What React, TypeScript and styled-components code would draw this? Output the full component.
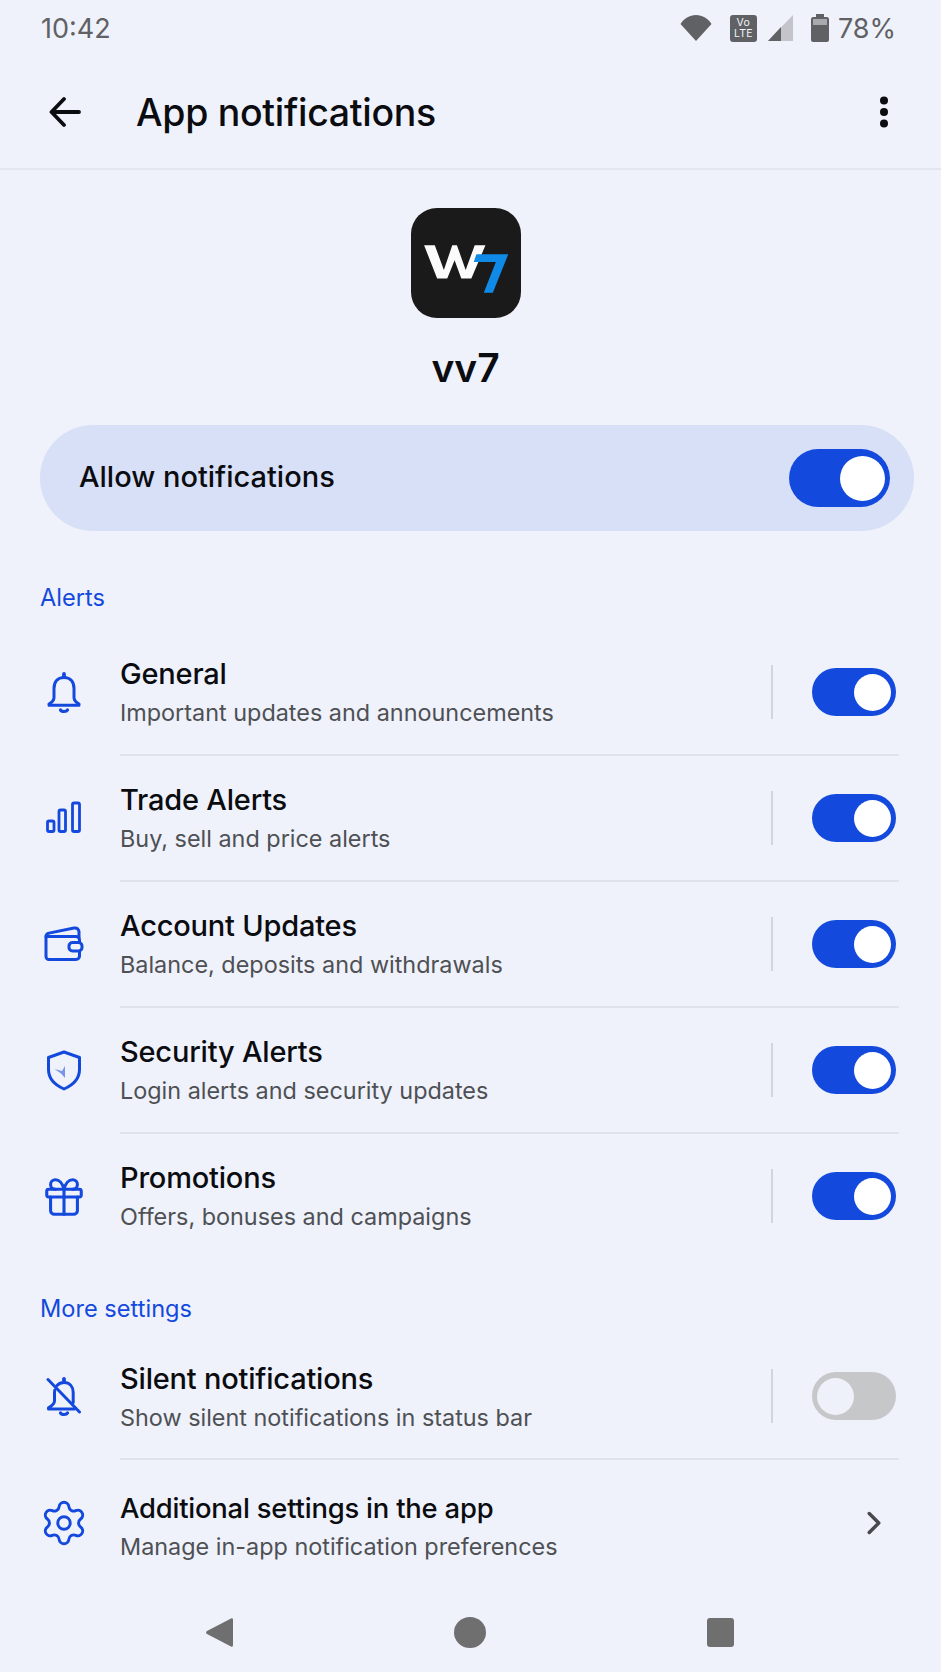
import React from "react";
import styled, { createGlobalStyle } from "styled-components";
import { ChevronRight, Gift, Settings } from "lucide-react";

const BLUE = "#1449dd";
const FONT = `"Inter", "Roboto", "Noto Sans", "Liberation Sans", sans-serif`;

const Global = createGlobalStyle`
  html, body { margin: 0; padding: 0; background: #eff2fb; }
  * { box-sizing: border-box; }
`;

const Page = styled.div`
  width: 941px;
  height: 1672px;
  background: #eff2fb;
  font-family: ${FONT};
  display: flex;
  flex-direction: column;
  overflow: hidden;
`;

const StatusBar = styled.div`
  height: 56px;
  padding: 0 45px 0 41px;
  display: flex;
  align-items: center;
  justify-content: space-between;
  color: #5f6164;
  font-size: 27px;
`;

const StatusIcons = styled.div`
  display: flex;
  align-items: center;
`;

const Volte = styled.div`
  width: 27px;
  height: 27px;
  margin: 0 11px 0 18px;
  border-radius: 3px;
  background: #5f6164;
  color: #f2f4fb;
  font-size: 10.5px;
  line-height: 11px;
  letter-spacing: 0.3px;
  text-align: center;
  padding-top: 2px;
`;

const BatteryGap = styled.span`
  width: 18px;
`;

const Percent = styled.span`
  margin-left: 9px;
`;

const Header = styled.header`
  height: 114px;
  padding: 0 52px 0 49px;
  border-bottom: 2px solid #e3e6ee;
  display: flex;
  align-items: center;
  flex: none;
`;

const Title = styled.h1`
  margin: 0 0 0 55px;
  flex: 1;
  font-size: 37.5px;
  font-weight: 500;
  letter-spacing: -0.3px;
  color: #0b0c10;
`;

const AppBlock = styled.div`
  display: flex;
  flex-direction: column;
  align-items: center;
  padding: 38px 10px 0 0;
`;

const AppIcon = styled.div`
  width: 110px;
  height: 110px;
  border-radius: 26px;
  background: #1a1a1a;
  overflow: hidden;
`;

const AppName = styled.div`
  margin-top: 25px;
  height: 51px;
  font-size: 39px;
  line-height: 50px;
  font-weight: 600;
  color: #0b0c10;
`;

const AllowCard = styled.div`
  margin: 31px 27px 0 40px;
  height: 106px;
  border-radius: 53px;
  background: #d8e0f8;
  padding: 0 24px 0 39px;
  display: flex;
  align-items: center;
  justify-content: space-between;
  font-size: 29px;
  font-weight: 500;
  color: #0b0c10;
`;

const AllowLabel = styled.span`
  padding-bottom: 4px;
`;

const SectionLabel = styled.div<{ $top: number }>`
  margin: ${(p) => p.$top}px 0 0 40px;
  height: 30px;
  font-size: 23.6px;
  line-height: 30px;
  color: ${BLUE};
`;

const SectionGap = styled.div<{ $h: number }>`
  height: ${(p) => p.$h}px;
`;

const Row = styled.div<{ $height?: number }>`
  display: flex;
  align-items: stretch;
  padding-left: 44px;
  height: ${(p) => p.$height ?? 126}px;
`;

const IconSlot = styled.div<{ $lift?: number }>`
  width: 40px;
  margin-right: 36px;
  padding-bottom: ${(p) => p.$lift ?? 0}px;
  flex: none;
  display: flex;
  align-items: center;
  justify-content: center;
  color: ${BLUE};
  svg {
    flex: none;
  }
`;

const RowBody = styled.div<{ $last?: boolean }>`
  flex: 1;
  margin-right: 42px;
  border-bottom: 2px solid ${(p) => (p.$last ? "transparent" : "#dfe2ea")};
  display: flex;
  align-items: center;
`;

const RowText = styled.div<{ $shift?: number }>`
  flex: 1;
  padding-top: ${(p) => p.$shift ?? 2}px;
`;

const RowTitle = styled.div<{ $size?: number }>`
  font-size: ${(p) => p.$size ?? 29}px;
  line-height: 38px;
  font-weight: 500;
  letter-spacing: -0.2px;
  color: #0b0c10;
`;

const RowSub = styled.div`
  margin-top: 1px;
  font-size: 23.4px;
  line-height: 38px;
  color: #4e5054;
`;

const VDivider = styled.div`
  width: 2px;
  height: 54px;
  background: #d3d5da;
  margin-right: 39px;
`;

const Track = styled.div<{ $w: number; $h: number; $on: boolean }>`
  width: ${(p) => p.$w}px;
  height: ${(p) => p.$h}px;
  border-radius: ${(p) => p.$h / 2}px;
  background: ${(p) => (p.$on ? BLUE : "#c6c7c9")};
  padding: 0 5px;
  display: flex;
  align-items: center;
  justify-content: ${(p) => (p.$on ? "flex-end" : "flex-start")};
  flex: none;
`;

const Thumb = styled.div<{ $d: number; $on: boolean }>`
  width: ${(p) => p.$d}px;
  height: ${(p) => p.$d}px;
  border-radius: 50%;
  background: ${(p) => (p.$on ? "#ffffff" : "#eef1f9")};
`;

const ToggleSlot = styled.div`
  width: 87px;
  display: flex;
  flex: none;
`;

const ChevronSlot = styled.div`
  width: 44px;
  margin-top: -2px;
  color: #47494d;
  display: flex;
  align-items: center;
  justify-content: flex-start;
`;

const NavBar = styled.nav`
  margin-top: auto;
  height: 80px;
  flex: none;
  padding-left: 206px;
  display: flex;
  align-items: center;
`;

const NavCircle = styled.div`
  width: 32px;
  height: 31px;
  border-radius: 50%;
  background: #6f6f70;
  margin: 0 221px;
`;

const NavSquare = styled.div`
  width: 27px;
  height: 29px;
  border-radius: 3px;
  background: #6f6f70;
`;

const Toggle = ({ on = true, big = false }: { on?: boolean; big?: boolean }) => (
  <Track $w={big ? 101 : 84} $h={big ? 58 : 48} $on={on}>
    <Thumb $d={big ? 45 : 37} $on={on} />
  </Track>
);

const BellIcon = () => (
  <svg width="40" height="42" viewBox="0 0 40 42" fill="none" stroke="currentColor" strokeWidth="3" strokeLinejoin="round" strokeLinecap="round">
    <path d="M20 5.5c-6.5 0-10 4.600-10 11v9c0 2.500-1.600 4.500-5 6.500v1.200h30V32c-3.400-2-5-4-5-6.500v-9c0-6.400-3.500-11-10-11z" />
    <path d="M20 2v2.500" strokeWidth="3.800" />
    <path d="M16.500 38c1 2 6 2 7 0" strokeWidth="3.200" />
  </svg>
);

const BarsIcon = () => (
  <svg width="36" height="32" viewBox="0 0 36 32" fill="none" stroke="currentColor" strokeWidth="2.800" strokeLinejoin="round">
    <rect x="1.500" y="20" width="6.500" height="10.500" rx="1.500" />
    <rect x="13" y="9" width="6.500" height="21.500" rx="1.500" />
    <rect x="26.500" y="2" width="7" height="28.500" rx="1.500" />
  </svg>
);

const WalletIcon = () => (
  <svg width="40" height="37" viewBox="0 0 40 37" fill="none" stroke="currentColor" strokeWidth="3" strokeLinejoin="round" strokeLinecap="round">
    <path d="M2 11.500h30c2 0 3.500 1.500 3.500 3.500v16c0 2-1.500 3.500-3.500 3.500H5c-1.700 0-3-1.300-3-3V11.500z" />
    <path d="M2 11.500c0-2 1-3 3-3.400L30 3c2.500-.4 4.500 1 5 3.500v6" />
    <rect x="25" y="17.500" width="13" height="8.500" rx="3.500" fill="#eff2fb" />
  </svg>
);

const ShieldIcon = () => (
  <svg width="36" height="41" viewBox="0 0 36 41" fill="none">
    <path d="M18 2 L33.500 7.500 V19.500 C33.500 28.500 27 35 18 39 C9 35 2.500 28.500 2.500 19.500 V7.500 Z" stroke="currentColor" strokeWidth="3" strokeLinejoin="round" />
    <path d="M8.500 19 L16 21 L19 16 V28 L15 23.500 Z" fill="currentColor" opacity="0.55" />
  </svg>
);

const BellOffIcon = () => (
  <svg width="36" height="40" viewBox="0 0 36 40" fill="none" stroke="currentColor" strokeWidth="3" strokeLinejoin="round" strokeLinecap="round">
    <path d="M11 8.500C12.800 6.500 15 5.500 18 5.500c6 0 9.200 4.300 9.200 10v10" />
    <path d="M8.800 13c-.2 1-.3 1.700-.3 2.700V24c0 2.500-2 4.500-6 6.800v1.200h26" />
    <path d="M18 2v2" strokeWidth="3.800" />
    <path d="M14.500 36c1 2 6 2 7 0" strokeWidth="3.200" />
    <path d="M2 2.500 33.500 35" />
  </svg>
);

const WifiIcon = () => (
  <svg width="32" height="26" viewBox="0 0 32 26" fill="#5f6164">
    <path d="M16 26 .5 9C4 3.500 9.500 0 16 0s12 3.500 15.500 9L16 26z" />
  </svg>
);

const SignalIcon = () => (
  <svg width="25" height="26" viewBox="0 0 25 26">
    <path d="M25 0V26H0Z" fill="#c3c5ca" />
    <path d="M13 12V26H0Z" fill="#5f6164" />
  </svg>
);

const BatteryIcon = () => (
  <svg width="18" height="28" viewBox="0 0 18 28">
    <path d="M5 0h8v3h3c1 0 2 1 2 2v21c0 1-1 2-2 2H2c-1 0-2-1-2-2V5c0-1 1-2 2-2h3z" fill="#5f6164" />
    <rect x="2" y="5" width="14" height="6" fill="#a8aaae" />
  </svg>
);

const ArrowIcon = () => (
  <svg width="32" height="32" viewBox="0 0 32 32" fill="none" stroke="#0b0c10" strokeWidth="3.800" strokeLinecap="round" strokeLinejoin="round">
    <path d="M30 16H3M15 3 2.500 16 15 29" />
  </svg>
);

const DotsIcon = () => (
  <svg width="10" height="32" viewBox="0 0 10 32" fill="#0b0c10">
    <circle cx="5" cy="4.500" r="4" />
    <circle cx="5" cy="16" r="4" />
    <circle cx="5" cy="27.500" r="4" />
  </svg>
);

const Logo = () => (
  <svg width="110" height="110" viewBox="92 52 328 328">
    <path d="M131 163h32l27 74 25-74h14l26 74 27-74h32l-42 99h-30l-20-54-22 54h-30z" fill="#fbfbfb" />
    <path d="M287 190h95l-46 115h-27l36-92h-66z" fill="#0f8ae6" />
  </svg>
);

const NavTriangle = () => (
  <svg width="27" height="29" viewBox="0 0 27 29" fill="#6f6f70">
    <path d="M25 .5c1.200-.6 2 0 2 1.500v25c0 1.500-.8 2-2 1.500L1 16c-1.300-.8-1.300-2 0-3z" />
  </svg>
);

type Item = { icon: React.ReactNode; lift?: number; title: string; sub: string };

const alerts: Item[] = [
  { icon: <BellIcon />, title: "General", sub: "Important updates and announcements" },
  { icon: <BarsIcon />, lift: 4, title: "Trade Alerts", sub: "Buy, sell and price alerts" },
  { icon: <WalletIcon />, lift: 4, title: "Account Updates", sub: "Balance, deposits and withdrawals" },
  { icon: <ShieldIcon />, lift: 2, title: "Security Alerts", sub: "Login alerts and security updates" },
  { icon: <Gift size={46} strokeWidth={1.600} />, title: "Promotions", sub: "Offers, bonuses and campaigns" },
];

export default function App() {
  return (
    <Page>
      <Global />
      <StatusBar>
        <span>10:42</span>
        <StatusIcons>
          <WifiIcon />
          <Volte>
            Vo
            <br />
            LTE
          </Volte>
          <SignalIcon />
          <BatteryGap />
          <BatteryIcon />
          <Percent>78%</Percent>
        </StatusIcons>
      </StatusBar>
      <Header>
        <ArrowIcon />
        <Title>App notifications</Title>
        <DotsIcon />
      </Header>
      <AppBlock>
        <AppIcon>
          <Logo />
        </AppIcon>
        <AppName>vv7</AppName>
      </AppBlock>
      <AllowCard>
        <AllowLabel>Allow notifications</AllowLabel>
        <Toggle big />
      </AllowCard>
      <SectionLabel $top={52}>Alerts</SectionLabel>
      <SectionGap $h={17} />
      {alerts.map((a, i) => (
        <Row key={a.title}>
          <IconSlot $lift={a.lift}>{a.icon}</IconSlot>
          <RowBody $last={i === alerts.length - 1}>
            <RowText>
              <RowTitle>{a.title}</RowTitle>
              <RowSub>{a.sub}</RowSub>
            </RowText>
            <VDivider />
            <ToggleSlot>
              <Toggle />
            </ToggleSlot>
          </RowBody>
        </Row>
      ))}
      <SectionLabel $top={34}>More settings</SectionLabel>
      <SectionGap $h={10} />
      <Row>
        <IconSlot>
          <BellOffIcon />
        </IconSlot>
        <RowBody>
          <RowText $shift={4}>
            <RowTitle>Silent notifications</RowTitle>
            <RowSub>Show silent notifications in status bar</RowSub>
          </RowText>
          <VDivider />
          <ToggleSlot>
            <Toggle on={false} />
          </ToggleSlot>
        </RowBody>
      </Row>
      <Row $height={130}>
        <IconSlot $lift={4}>
          <Settings size={50} strokeWidth={1.400} />
        </IconSlot>
        <RowBody $last>
          <RowText $shift={7}>
            <RowTitle $size={27.4}>Additional settings in the app</RowTitle>
            <RowSub>Manage in-app notification preferences</RowSub>
          </RowText>
          <ChevronSlot>
            <ChevronRight size={38} strokeWidth={2.200} />
          </ChevronSlot>
        </RowBody>
      </Row>
      <NavBar>
        <NavTriangle />
        <NavCircle />
        <NavSquare />
      </NavBar>
    </Page>
  );
}
